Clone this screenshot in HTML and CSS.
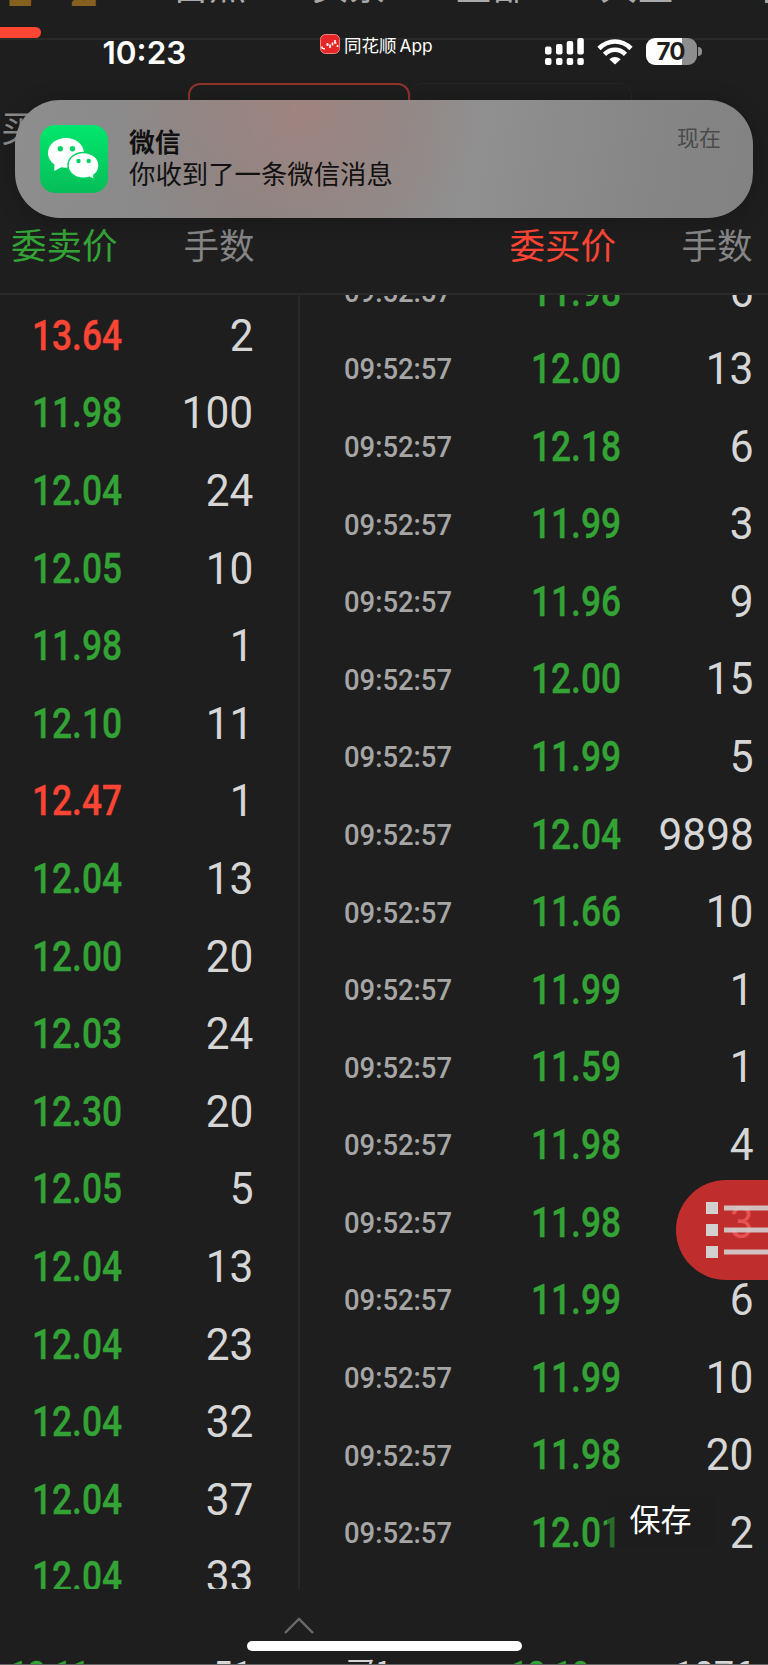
FILE: index.html
```html
<!DOCTYPE html>
<html lang="zh-CN">
<head>
<meta charset="utf-8">
<title>委托明细</title>
<link rel="stylesheet" href="styles.css">
</head>
<body>
<div class="screen">
  <header class="tabs">
    <div class="tab-row">
      <span class="tab gold">L2</span><span class="tab t2">自然</span><span class="tab t3">买累</span><span class="tab t4">全部</span><span class="tab t5">大全</span><span class="tab t6">十档</span>
    </div>
    <div class="progress"></div>
  </header>
  <section class="filters">
    <div class="filter-tabs"><div class="filter active"></div><div class="filter"></div></div>
    <div class="side-label">买</div>
  </section>
  <div class="thead">
    <span class="h-sell">委卖价</span><span class="h-lots">手数</span><span class="h-buy">委买价</span><span class="h-lots2">手数</span>
  </div>
  <main class="book">
    <div class="col sell" id="sell"></div>
    <div class="col buy" id="buy"></div>
  </main>
  <footer class="drawer">
    <svg class="chevron" width="32" height="18" viewBox="0 0 32 18"><path d="M2 16 16 2 30 16" fill="none" stroke="#6b6b6b" stroke-width="2.4"/></svg>
    <div class="peek">
      <span class="p1"><b class="n price">12.11</b></span><span class="p2"><b class="n qty">51</b></span><span class="p3">买1</span><span class="p4"><b class="n price">12.10</b></span><span class="p5"><b class="n qty">1076</b></span>
    </div>
  </footer>

  <div class="status">
    <span class="clock">10:23</span>
    <span class="app">
      <svg width="20" height="20" viewBox="0 0 20 20"><rect x=".5" y=".5" width="19" height="19" rx="5" fill="#e62629" stroke="#f4817c"/><path d="M2 12.500v2M4 14v1.500M7.500 9v3M10 10.500v3.500M12.500 8.500v3M15 6v3.500M17.500 11v2" fill="none" stroke="#fff" stroke-width="1.600"/><path d="M2 14.500h3M6.500 10.500h2M14 9h2.500" stroke="#fff" fill="none"/></svg>
      <span>同花顺<i>App</i></span>
    </span>
    <svg class="signal" width="39" height="28" viewBox="0 0 39 28" fill="#fff"><rect x="0" y="8.5" width="6.5" height="8" rx="2"/><rect x="11" y="6" width="6.5" height="10.500" rx="2"/><rect x="21.700" y="3" width="6.500" height="13.500" rx="2"/><rect x="32.300" y="0" width="6.500" height="16.500" rx="2"/><rect x="0" y="20" width="6.500" height="7" rx="2"/><rect x="11" y="20" width="6.500" height="7" rx="2"/><rect x="21.700" y="20" width="6.500" height="7" rx="2"/><rect x="32.300" y="20" width="6.500" height="7" rx="2"/></svg>
    <svg class="wifi" width="36" height="26" viewBox="0 0 36 26"><g fill="none" stroke="#fff" stroke-width="4.600"><path d="M2 9.500Q9 2.500 18 2.500T34 9.500"/><path d="M7.500 15.300Q12 10.800 18 10.800T28.500 15.300"/></g><path d="M12.300 20.300Q18 15.600 23.700 20.300L18 25.600Z" fill="#fff"/></svg>
    <div class="battery"><span>70</span></div>
    <i class="cap"></i>
  </div>

  <div class="notice">
    <svg class="wechat" width="68" height="68" viewBox="0 0 68 68">
      <defs><linearGradient id="g" x2="0" y2="1"><stop stop-color="#02e76d"/><stop offset="1" stop-color="#07bd58"/></linearGradient></defs>
      <rect width="68" height="68" rx="15" fill="url(#g)"/>
      <path d="M26 13C16 13 8 19.600 8 28c0 4.700 2.500 8.700 6.400 11.400L14.300 46l7-3.700c1.500.3 3 .5 4.700.5 10 0 18-6.600 18-14.800S36 13 26 13Z" fill="#fff"/>
      <path d="M43.500 27.500c8.700 0 15.500 5.800 15.500 12.900 0 4-2 7.400-5.200 9.700l.2 4.400-4.600-2.200c-1.800.6-3.700.9-5.900.9C34.800 53.200 28 47.600 28 40.400s6.800-12.900 15.500-12.900Z" fill="#fff" stroke="#04d163" stroke-width="1.500"/>
      <g fill="#04d364"><circle cx="20.300" cy="23.700" r="2.700"/><circle cx="32.500" cy="23.700" r="2.700"/><circle cx="38.500" cy="36" r="2.200"/><circle cx="48.700" cy="36" r="2.200"/></g>
    </svg>
    <div class="msg"><strong>微信</strong><span>你收到了一条微信消息</span></div>
    <time>现在</time>
  </div>

  <button class="fab" aria-label="菜单"><svg width="62" height="56" viewBox="0 0 62 56" fill="#d3d0d0"><path d="M0 0h12v12H0zM0 22h12v12H0zM0 44h12v12H0z"/><path fill-opacity=".9" d="M18 3.500h44v5H18zM18 25.500h44v5H18zM18 47.500h44v5H18z"/></svg></button>
  <button class="save">保存</button>
  <div class="home"></div>
</div>
<script src="book.js"></script>
</body>
</html>
```
FILE: styles.css
```css
* { box-sizing: border-box; }
body { margin: 0; background: #1e1e1e; }
.screen { position: relative; width: 768px; height: 1665px; overflow: hidden; background: #1e1e1e; color: #d4d4d4; font-family: Inter, "Noto Sans CJK SC", sans-serif; display: flex; flex-direction: column; }
.n { display: inline-block; font-family: Roboto, sans-serif; line-height: 1; white-space: nowrap; vertical-align: middle; }
.row > span { display: block; line-height: 0; }
.price { font-size: 42px; font-weight: 500; transform: translateY(.5px) scaleX(.84); transform-origin: 0 50%; color: #34a336; -webkit-text-stroke: .4px currentColor; }
.price.up { color: #fc4534; }
.qty { font-size: 44px; font-weight: 400; transform: translateY(.5px) scaleX(.965); transform-origin: 100% 50%; color: #d6d6d6; }
.time { font-size: 29.500px; font-weight: 500; transform: translateY(1.500px) scaleX(.93); transform-origin: 0 50%; color: #a6a6a6; }

.tabs { height: 40px; flex: none; overflow: hidden; border-bottom: 2px solid #292929; }
.tab-row { display: grid; grid-template-columns: 172px 140px 143px 145px 148px 90px; height: 27px; }
.tab { font: 37px/40px "Noto Sans CJK SC", sans-serif; color: #aaa; margin-top: -36px; white-space: nowrap; }
.gold { color: #86601f; font-size: 48px; font-weight: 700; letter-spacing: 37px; padding-left: 5px; margin-top: -35px; }
.progress { width: 41px; height: 11px; background: #ff4632; border-radius: 0 6px 6px 0; }

.filters { height: 171px; flex: none; padding: 43px 0 0; }
.filter-tabs { display: flex; padding-left: 188px; }
.filter { width: 222px; height: 40px; border: 1px solid #252525; border-radius: 12px; }
.filter.active { border: 2px solid #8f3429; }
.side-label { font: 36px/40px "Noto Sans CJK SC", sans-serif; color: #8d8d8d; margin-top: -17px; padding-left: 1px; }

.thead { height: 84px; flex: none; display: grid; grid-template-columns: 172.500px 326px 172px 86px; padding-left: 11px; border-bottom: 2px solid #292929; font: 35.500px/52px "Noto Sans CJK SC", sans-serif; color: #858585; padding-top: 7px; white-space: nowrap; }
.h-sell { color: #34a336; }
.h-buy { color: #fc4534; }

.book { height: 1294px; flex: none; display: grid; grid-template-columns: 300px 468px; overflow: hidden; }
.col { overflow: hidden; height: 1294px; }
.sell { border-right: 2px solid #282828; padding-top: 1px; }
.buy .row:first-child { margin-top: -43.300px; }
.row { height: 77.600px; display: grid; align-items: center; }
.sell .row { grid-template-columns: 101px 121px; padding-left: 31.500px; }
.buy .row { grid-template-columns: 186.500px 120px 103px; padding-left: 44px; }
.row > :last-child { text-align: right; }

.drawer { flex: 1; display: flex; flex-direction: column; padding-top: 28px; overflow: hidden; border-bottom: 1px solid #666; }
.chevron { margin-left: 283px; flex: none; }
.peek { display: grid; grid-template-columns: 172px 81px 253px 120px 128px; margin-top: 20px; height: 46px; flex: none; line-height: 0; }
.peek .price { font-size: 37px; }
.peek .qty { font-size: 37px; }
.p1 { padding-left: 10px; }
.p2, .p5 { text-align: right; }
.p3 { font: 30px/36px "Noto Sans CJK SC", sans-serif; padding-left: 92px; margin-top: -3px; white-space: nowrap; }
.p4 { padding-left: 4px; }

.status { position: absolute; left: 0; top: 30px; width: 768px; height: 48px; color: #fff; display: flex; align-items: flex-start; }
.clock { font: 600 31.500px/46px Inter, sans-serif; width: 217px; padding-left: 102.500px; flex: none; white-space: nowrap; }
.app { display: flex; gap: 4px; margin-left: 103px; padding-top: 4px; width: 224px; flex: none; font: 17.500px/22px "Noto Sans CJK SC", sans-serif; white-space: nowrap; }
.app i { font: 17.300px/22px Inter, sans-serif; margin-left: 3px; }
.signal { margin: 8px 13px 0 1px; flex: none; }
.wifi { margin: 9px 13px 0 0; flex: none; }
.battery { width: 51px; height: 27px; margin-top: 8px; flex: none; border-radius: 9px; background: linear-gradient(90deg, #fff 0 71%, #8e8e8e 71%); color: #1e1e1e; font: 700 24px/27px Inter, sans-serif; text-align: center; letter-spacing: -1px; padding-right: 2px; }
.cap { width: 4px; height: 9px; margin: 17px 0 0 1px; background: #8e8e8e; border-radius: 0 5px 5px 0; }

.notice { position: absolute; left: 15px; top: 100px; width: 738px; height: 118px; border-radius: 45px; padding: 25px 32px 0 25px; display: flex; background: radial-gradient(ellipse 190px 190px at 285px 8px, rgba(172,130,124,.65), rgba(160,130,125,.38) 55%, transparent), linear-gradient(100deg, #8e8e8e, #878686 35%, #909090 62%, #868686 85%, #828282); box-shadow: 0 2px 22px rgba(0,0,0,.22); color: #121111; font-family: "Noto Sans CJK SC", sans-serif; }
.wechat { flex: none; }
.msg { display: flex; flex-direction: column; margin-left: 21px; font-size: 26.400px; line-height: 32px; flex: 1; }
.msg strong { font-weight: 700; font-size: 25.800px; }
.notice time { font-size: 22px; line-height: 27px; color: #4b4b4b; margin-top: -2px; }

.fab { position: absolute; left: 676px; top: 1180px; width: 100px; height: 100px; border: 0; border-radius: 50px 0 0 50px; background: rgba(232,49,49,.8); padding: 0 0 0 30px; display: flex; align-items: center; overflow: hidden; }
.fab svg { display: block; flex: none; }
.save { position: absolute; left: 607px; top: 1494px; width: 107px; height: 53px; border: 0; padding: 0 0 5px; background: rgba(29,29,29,.42); color: #fff; font: 31px/48px "Noto Sans CJK SC", sans-serif; text-align: center; }
.home { position: absolute; left: 247px; top: 1641px; width: 275px; height: 10px; border-radius: 5px; background: #fff; }
```
FILE: book.js
```js
const sell = [["13.64", 2, 1], ["11.98", 100], ["12.04", 24], ["12.05", 10], ["11.98", 1], ["12.10", 11], ["12.47", 1, 1], ["12.04", 13], ["12.00", 20], ["12.03", 24], ["12.30", 20], ["12.05", 5], ["12.04", 13], ["12.04", 23], ["12.04", 32], ["12.04", 37], ["12.04", 33]];
const buy = [["11.98", 6], ["12.00", 13], ["12.18", 6], ["11.99", 3], ["11.96", 9], ["12.00", 15], ["11.99", 5], ["12.04", 9898], ["11.66", 10], ["11.99", 1], ["11.59", 1], ["11.98", 4], ["11.98", 3], ["11.99", 6], ["11.99", 10], ["11.98", 20], ["12.01", 2]];

const price = ([value, , up]) => `<span><b class="n price${up ? " up" : ""}">${value}</b></span>`;
const qty = ([, lots]) => `<span><b class="n qty">${lots}</b></span>`;

document.getElementById("sell").innerHTML = sell.map(r => `<div class="row">${price(r)}${qty(r)}</div>`).join("");
document.getElementById("buy").innerHTML = buy.map(r => `<div class="row"><span><b class="n time">09:52:57</b></span>${price(r)}${qty(r)}</div>`).join("");
```
